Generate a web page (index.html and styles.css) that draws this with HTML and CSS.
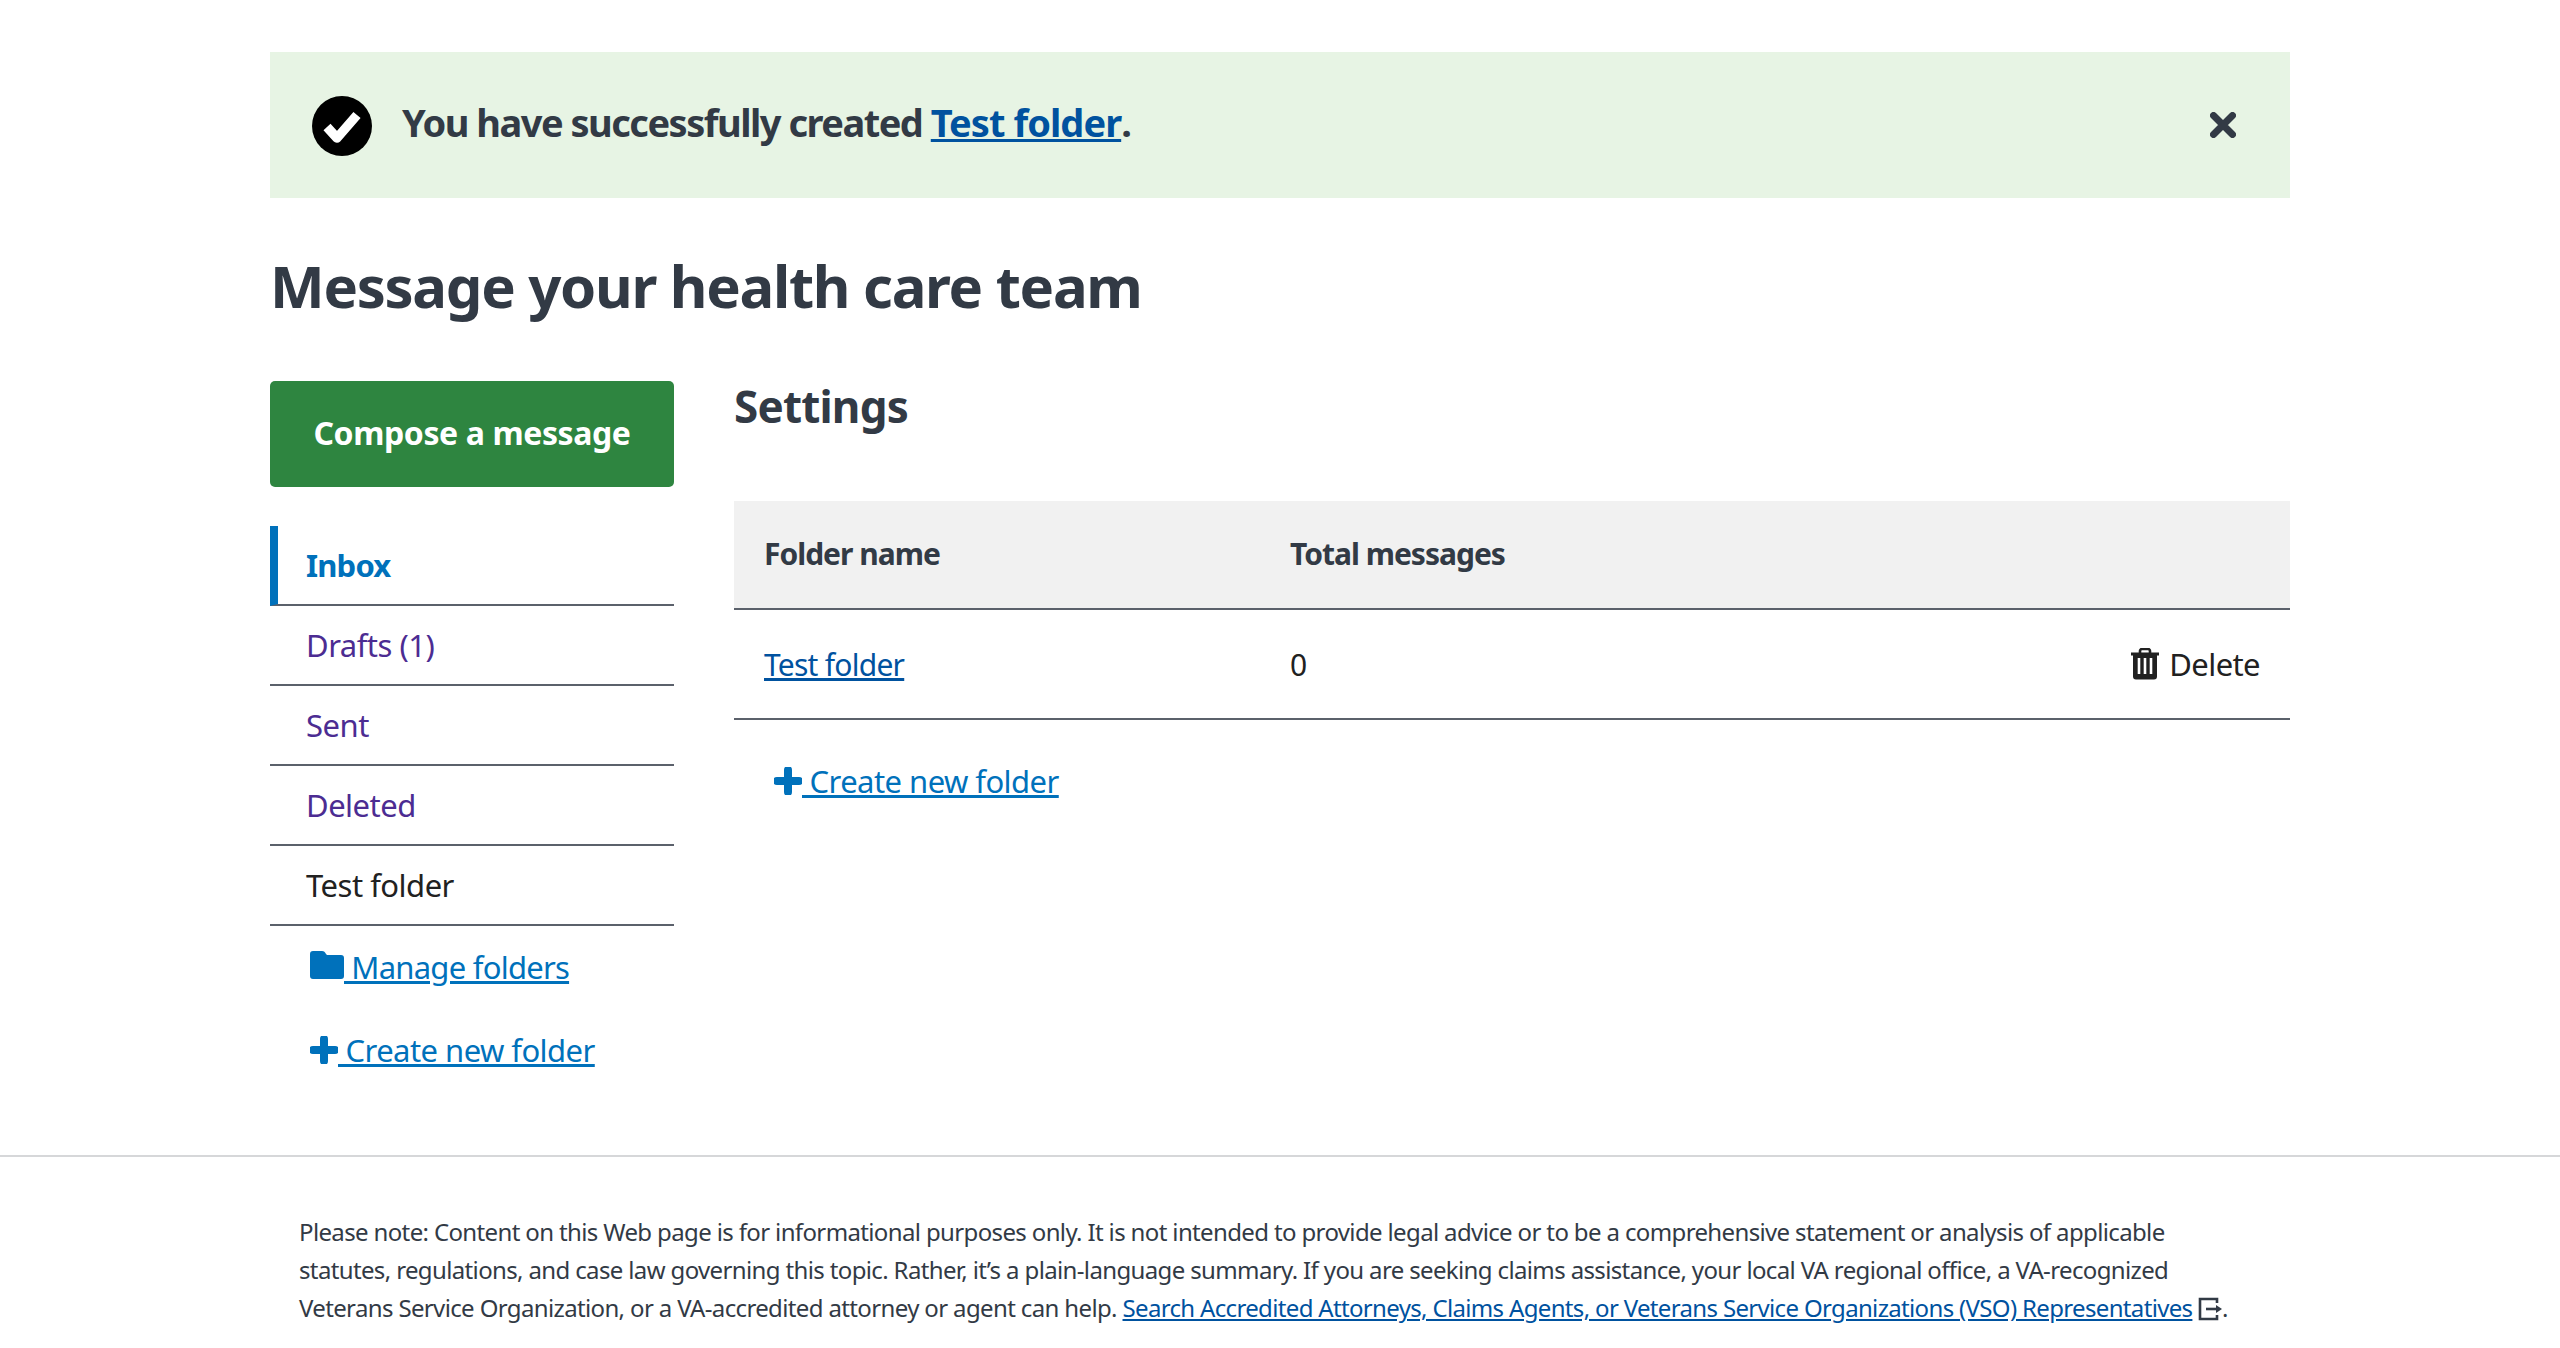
FILE: index.html
```html
<!DOCTYPE html>
<html lang="en">
<head>
<meta charset="utf-8">
<title>Message your health care team</title>
<link rel="stylesheet" href="styles.css">
</head>
<body>
<main class="page">
  <div class="alert">
    <svg class="alert-icon" viewBox="0 0 60 60"><circle cx="30" cy="30" r="30" fill="#000"/><path d="M15 31l10 11 20-23" fill="none" stroke="#fff" stroke-width="9.500" stroke-linejoin="round"/></svg>
    <p class="alert-text">You have successfully created <a href="#" class="alert-link">Test folder</a>.</p>
    <svg class="alert-close" viewBox="0 0 26 26"><path d="M3.500 3.500l19 19M22.500 3.500l-19 19" fill="none" stroke="#323a45" stroke-width="7" stroke-linecap="round"/></svg>
  </div>
  <h1 class="title">Message your health care team</h1>
  <div class="columns">
    <aside class="sidebar">
      <a href="#" class="compose">Compose a message</a>
      <ul class="nav">
        <li class="nav-item active">Inbox</li>
        <li class="nav-item visited">Drafts (1)</li>
        <li class="nav-item visited">Sent</li>
        <li class="nav-item visited">Deleted</li>
        <li class="nav-item">Test folder</li>
      </ul>
      <a href="#" class="side-link first"><svg class="folder" viewBox="0 0 34 28"><path d="M3 0h9c2 0 3 1 4 3l1 1h14c2 0 3 1 3 3v18c0 2-1 3-3 3H3c-2 0-3-1-3-3V3c0-2 1-3 3-3z" fill="#0071bb"/></svg> Manage folders</a>
      <a href="#" class="side-link"><svg class="plus" viewBox="0 0 28 28"><path d="M14 3v22M3 14h22" fill="none" stroke="#0071bb" stroke-width="8" stroke-linecap="round"/></svg> Create new folder</a>
    </aside>
    <section class="content">
      <h2 class="settings">Settings</h2>
      <div class="table">
        <div class="row head">
          <div class="col-name">Folder name</div>
          <div class="col-total">Total messages</div>
        </div>
        <div class="row body-row">
          <div class="col-name"><a href="#" class="row-link">Test folder</a></div>
          <div class="col-total">0</div>
          <div class="col-action"><svg class="trash" viewBox="0 0 28 32"><path d="M9 5V3c0-1 1-2 2-2h6c1 0 2 1 2 2v2" fill="none" stroke="#212121" stroke-width="2.6"/><path d="M0 4.500h28v3h-2v21c0 2-1 3-3 3H5c-2 0-3-1-3-3v-21H0z" fill="#212121"/><path d="M8 10v16M14 10v16M20 10v16" stroke="#fff" stroke-width="2.600"/></svg> Delete</div>
        </div>
      </div>
      <a href="#" class="side-link content-link"><svg class="plus" viewBox="0 0 28 28"><path d="M14 3v22M3 14h22" fill="none" stroke="#0071bb" stroke-width="8" stroke-linecap="round"/></svg> Create new folder</a>
    </section>
  </div>
</main>
<footer class="footer">
  <p class="note">Please note: Content on this Web page is for informational purposes only. It is not intended to provide legal advice or to be a comprehensive statement or analysis of applicable<br>statutes, regulations, and case law governing this topic. Rather, it’s a plain-language summary. If you are seeking claims assistance, your local VA regional office, a VA-recognized<br>Veterans Service Organization, or a VA-accredited attorney or agent can help. <a href="#" class="note-link">Search Accredited Attorneys, Claims Agents, or Veterans Service Organizations (VSO) Representatives</a> <svg class="ext" viewBox="0 0 24 24"><path d="M19 6V2H2v20h17v-4" fill="none" stroke="#323a45" stroke-width="2.600"/><path d="M8 12h11" stroke="#323a45" stroke-width="2.600"/><path d="M18 8l6 4-6 4z" fill="#323a45"/></svg>.</p>
</footer>
</body>
</html>
```
FILE: styles.css
```css
* { box-sizing: border-box; }
html, body { margin: 0; padding: 0; background: #fff; }
body { font-family: "Noto Sans", "Lato", sans-serif; color: #212121; height: 1348px; overflow: hidden; }
a { color: inherit; }
.page { width: 2020px; margin: 0 auto; padding-top: 52px; }
.alert { height: 146px; background: #e7f4e4; display: flex; align-items: center; padding: 0 54px 0 42px; }
.alert-icon { width: 60px; height: 60px; flex: none; margin: 2px 30px 0 0; }
.alert-text { flex: 1; margin: 0 0 6px; font-size: 38px; font-weight: 700; color: #323a45; letter-spacing: -1.5px; }
.alert-link { color: #00529f; letter-spacing: -0.95px; }
.alert-close { width: 26px; height: 26px; flex: none; }
.title { margin: 48px 0 0; font-size: 58px; line-height: 80px; font-weight: 700; color: #323a45; letter-spacing: -1.3px; }
.columns { display: grid; grid-template-columns: 404px 1556px; column-gap: 60px; margin-top: 55px; }
.compose { display: flex; align-items: center; justify-content: center; height: 106px; padding-bottom: 3px; background: #2e8540; color: #fff; border-radius: 5px; font-size: 32px; font-weight: 700; letter-spacing: -0.4px; text-decoration: none; }
.nav { list-style: none; margin: 39px 0 0; padding: 0; }
.nav-item { height: 80px; border-bottom: 2px solid #5b616b; display: flex; align-items: center; padding-left: 36px; font-size: 31px; letter-spacing: -0.5px; }
.active { color: #0071bb; font-weight: 700; border-left: 8px solid #0071bb; padding-left: 28px; letter-spacing: -0.8px; }
.visited { color: #4c2c92; }
.side-link { display: block; color: #0071bb; font-size: 31px; line-height: 44px; letter-spacing: -0.55px; margin: 39px 0 0 40px; }
.first { margin-top: 19px; letter-spacing: -0.75px; }
.folder { width: 34px; height: 28px; }
.plus { width: 28px; height: 28px; vertical-align: -2px; }
.settings { margin: 0; height: 120px; font-size: 44px; line-height: 50px; font-weight: 700; color: #323a45; letter-spacing: -0.8px; }
.table { width: 100%; }
.row { display: flex; align-items: center; padding: 0 30px; }
.head { height: 109px; padding-bottom: 3px; background: #f1f1f1; border-bottom: 2px solid #5b616b; font-size: 30px; letter-spacing: -1px; font-weight: 700; color: #323a45; }
.body-row { height: 110px; border-bottom: 2px solid #5b616b; font-size: 30px; letter-spacing: -0.75px; }
.col-name { width: 526px; }
.col-total { flex: 1; }
.col-action { display: flex; align-items: center; gap: 10px; font-size: 31px; letter-spacing: -0.6px; }
.row-link { color: #00529f; }
.trash { width: 28px; height: 32px; }
.content-link { margin: 39px 0 0 40px; width: max-content; }
.footer { border-top: 2px solid #d6d7d9; padding: 56px 0 0 299px; position: absolute; left: 0; right: 0; top: 1155px; }
.note { margin: 0; font-size: 24px; line-height: 38px; color: #323a45; letter-spacing: -0.635px; }
.note-link { color: #00529f; letter-spacing: -0.66px; }
.ext { width: 24px; height: 24px; vertical-align: -4px; }
```
